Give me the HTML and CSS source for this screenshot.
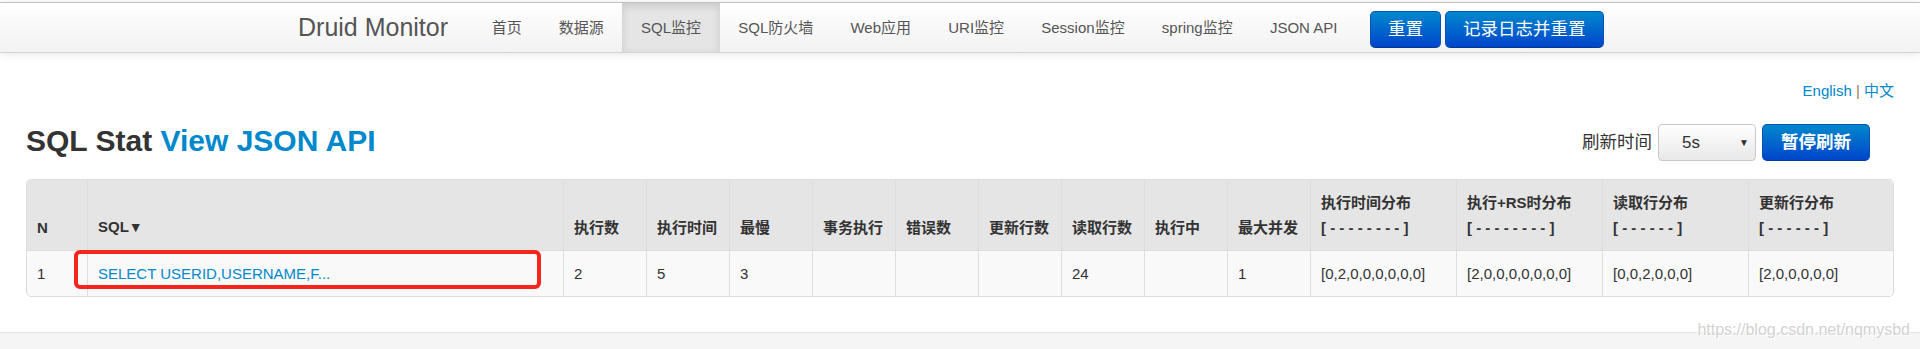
FILE: index.html
```html
<!DOCTYPE html>
<html lang="zh-CN">
<head>
  <meta charset="UTF-8">
  <meta name="viewport" content="width=device-width, initial-scale=1.0">
  <title>Druid Stat Index</title>
  <link rel="stylesheet" href="styles.css">
</head>
<body>
  <div class="navbar">
    <div class="navbar-inner">
      <a class="brand" href="#">Druid Monitor</a>
      <ul class="nav">
        <li><a href="#">首页</a></li>
        <li><a href="#">数据源</a></li>
        <li class="active"><a href="#">SQL监控</a></li>
        <li><a href="#">SQL防火墙</a></li>
        <li><a href="#">Web应用</a></li>
        <li><a href="#">URI监控</a></li>
        <li><a href="#">Session监控</a></li>
        <li><a href="#">spring监控</a></li>
        <li><a href="#">JSON API</a></li>
      </ul>
      <div class="nav-actions">
        <button class="btn btn-primary">重置</button>
        <button class="btn btn-primary">记录日志并重置</button>
      </div>
    </div>
  </div>

  <div class="container">
    <div class="lang"><a href="#">English</a> <span class="sep">|</span> <a href="#">中文</a></div>

    <div class="title-row">
      <h3>SQL Stat <a href="#">View JSON API</a></h3>
      <div class="refresh">
        <span>刷新时间</span>
        <div class="select"><span>5s</span><span class="caret">▼</span></div>
        <button class="btn btn-primary btn-bold">暂停刷新</button>
      </div>
    </div>

    <div class="table-wrap">
      <table class="stat-table">
        <thead>
          <tr>
            <th class="col-n">N</th>
            <th class="col-sql">SQL<span class="sort">▼</span></th>
            <th class="col-num">执行数</th>
            <th class="col-num">执行时间</th>
            <th class="col-num">最慢</th>
            <th class="col-num">事务执行</th>
            <th class="col-num">错误数</th>
            <th class="col-num">更新行数</th>
            <th class="col-num">读取行数</th>
            <th class="col-num">执行中</th>
            <th class="col-num">最大并发</th>
            <th class="col-dist">执行时间分布<br>[ - - - - - - - - ]</th>
            <th class="col-dist">执行+RS时分布<br>[ - - - - - - - - ]</th>
            <th class="col-dist">读取行分布<br>[ - - - - - - ]</th>
            <th>更新行分布<br>[ - - - - - - ]</th>
          </tr>
        </thead>
        <tbody>
          <tr>
            <td>1</td>
            <td><a href="#">SELECT USERID,USERNAME,F...</a></td>
            <td>2</td>
            <td>5</td>
            <td>3</td>
            <td></td>
            <td></td>
            <td></td>
            <td>24</td>
            <td></td>
            <td>1</td>
            <td>[0,2,0,0,0,0,0,0]</td>
            <td>[2,0,0,0,0,0,0,0]</td>
            <td>[0,0,2,0,0,0]</td>
            <td>[2,0,0,0,0,0]</td>
          </tr>
        </tbody>
      </table>
      <div class="mark"></div>
    </div>
  </div>

  <div class="footer"></div>
  <div class="watermark">https://blog.csdn.net/nqmysbd</div>
</body>
</html>
```

FILE: styles.css
```css
body {
  margin: 0;
  padding-top: 2px;
  font-family: "Liberation Sans", "Noto Sans CJK SC", sans-serif;
  font-size: 15px;
  line-height: 25px;
  color: #333;
  background-color: #fff;
  overflow: hidden;
}

a {
  color: #0088cc;
  text-decoration: none;
}

/* top bar */
.navbar {
  border-top: 1px solid #c2c2c2;
  border-bottom: 1px solid #d4d4d4;
  background: linear-gradient(#ffffff, #f2f2f2);
  box-shadow: 0 1px 10px rgba(0, 0, 0, 0.1);
}

.navbar-inner {
  display: flex;
  align-items: center;
  height: 49px;
  padding-left: 273px;
}

.brand {
  padding: 0 25px;
  font-size: 25px;
  line-height: 49px;
  color: #555;
}

.nav {
  display: flex;
  list-style: none;
  margin: 0;
  padding: 0;
}

.nav li a {
  display: block;
  padding: 0 18.6px;
  line-height: 49px;
  color: #555;
}

.nav li.active a {
  background-color: #e5e5e5;
  box-shadow: inset 0 3px 8px rgba(0, 0, 0, 0.125);
}

.nav-actions {
  display: flex;
  gap: 4px;
  margin-left: 14px;
  margin-top: 4px;
}

.btn {
  height: 37px;
  padding: 0 17px;
  font-family: inherit;
  font-size: 17.5px;
  line-height: 35px;
  border-radius: 5px;
  cursor: pointer;
}

.btn-primary {
  color: #fff;
  background: linear-gradient(#0088cc, #0044cc);
  border: 1px solid #0a4fb5;
  border-bottom-color: #063c8f;
}

.btn-bold {
  font-weight: bold;
  padding: 0 18px;
}

/* page */
.container {
  padding: 0 26px;
}

.lang {
  margin-top: 25px;
  text-align: right;
}

.sep {
  color: #9b7653;
}

.title-row {
  display: flex;
  justify-content: space-between;
  align-items: flex-end;
  margin-top: 18px;
}

.title-row h3 {
  margin: 0;
  font-size: 30px;
  line-height: 40px;
  font-weight: bold;
}

.refresh {
  display: flex;
  align-items: center;
  gap: 6px;
  margin-right: 24px;
  font-size: 17.5px;
}

.select {
  display: flex;
  align-items: center;
  justify-content: space-between;
  box-sizing: border-box;
  width: 98px;
  height: 37px;
  padding: 0 6px 0 23px;
  border: 1px solid #c8c8c8;
  border-radius: 4px;
  background: linear-gradient(#ffffff, #e8e8e8);
  font-size: 17px;
}

.select .caret {
  font-size: 10px;
  color: #333;
}

/* stat table */
.table-wrap {
  position: relative;
  margin-top: 18px;
}

.stat-table {
  width: 100%;
  table-layout: fixed;
  border: 1px solid #ddd;
  border-left: 0;
  border-collapse: separate;
  border-spacing: 0;
  border-radius: 5px;
}

.stat-table th,
.stat-table td {
  box-sizing: border-box;
  padding: 10px;
  border-left: 1px solid #ddd;
  text-align: left;
  white-space: nowrap;
}

.stat-table th {
  vertical-align: bottom;
  background-color: #e5e5e5;
  font-weight: bold;
}

.stat-table th .sort {
  font-size: 14px;
}

.stat-table td {
  border-top: 1px solid #ddd;
  background-color: #f9f9f9;
}

.stat-table th:first-child { border-top-left-radius: 5px; }
.stat-table th:last-child { border-top-right-radius: 5px; }
.stat-table td:first-child { border-bottom-left-radius: 5px; }
.stat-table td:last-child { border-bottom-right-radius: 5px; }

.col-n { width: 61px; }
.col-sql { width: 476px; }
.col-num { width: 83px; }
.col-dist { width: 146px; }

.mark {
  position: absolute;
  left: 48px;
  top: 71px;
  width: 467px;
  height: 39px;
  box-sizing: border-box;
  border: 4px solid #f4261c;
  border-radius: 6px;
}

.footer {
  margin-top: 35px;
  height: 16px;
  border-top: 1px solid #e3e3e3;
  background-color: #f5f5f5;
}

.watermark {
  position: absolute;
  top: 317px;
  right: 10px;
  font-size: 16px;
  color: #d2d2d2;
  text-shadow: 1px 1px 0 #fff, -1px -1px 0 #fff;
}
```
